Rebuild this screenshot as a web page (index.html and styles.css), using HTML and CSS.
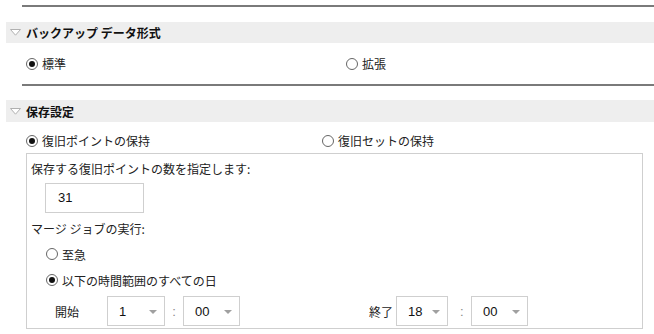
FILE: index.html
```html
<!DOCTYPE html>
<html lang="ja">
<head>
<meta charset="utf-8">
<link rel="stylesheet" href="styles.css">
</head>
<body>
<div class="page">
  <div class="rule"></div>
  <div class="sec-head">
    <svg class="tri" width="11" height="7" viewBox="0 0 11 7"><path d="M0.5 0.5 H10.5 L5.5 6.2 Z" fill="#fff" stroke="#b0b0b0" stroke-width="1"/></svg>
    <span>バックアップ データ形式</span>
  </div>
  <div class="opt-row row1">
    <label class="opt w320"><span class="radio on"></span>標準</label>
    <label class="opt"><span class="radio"></span>拡張</label>
  </div>
  <div class="rule"></div>
  <div class="sec-head sec2">
    <svg class="tri" width="11" height="7" viewBox="0 0 11 7"><path d="M0.5 0.5 H10.5 L5.5 6.2 Z" fill="#fff" stroke="#b0b0b0" stroke-width="1"/></svg>
    <span>保存設定</span>
  </div>
  <div class="opt-row row2">
    <label class="opt w296"><span class="radio on"></span>復旧ポイントの保持</label>
    <label class="opt"><span class="radio"></span>復旧セットの保持</label>
  </div>
  <div class="box">
    <div class="line">保存する復旧ポイントの数を指定します:</div>
    <div class="num">31</div>
    <div class="line l2">マージ ジョブの実行:</div>
    <div class="sub-opt first"><span class="radio"></span>至急</div>
    <div class="sub-opt"><span class="radio on"></span>以下の時間範囲のすべての日</div>
    <div class="time-row">
      <span class="tlabel start">開始</span>
      <div class="sel w58"><span>1</span><i class="arr"></i></div>
      <span class="colon c1">:</span>
      <div class="sel w57"><span>00</span><i class="arr"></i></div>
      <span class="tlabel end">終了</span>
      <div class="sel w52"><span>18</span><i class="arr"></i></div>
      <span class="colon c2">:</span>
      <div class="sel w57"><span>00</span><i class="arr"></i></div>
    </div>
  </div>
</div>
</body>
</html>
```

FILE: styles.css
```css
* { box-sizing: border-box; }
html, body { margin: 0; padding: 0; background: #fff; }
body {
  font-family: "Noto Sans CJK JP", "Liberation Sans", sans-serif;
  font-size: 12px;
  color: #222;
  width: 654px;
  height: 334px;
  overflow: hidden;
}
.page { padding: 5px 0 0 6px; }
.rule { margin-left: 16px; height: 2px; background: #7a7a7a; }
.sec-head {
  margin-top: 15px;
  height: 21px;
  background: #eeeeee;
  display: flex;
  align-items: center;
  padding-left: 4px;
  font-weight: bold;
  color: #111;
  font-size: 12px;
}
.sec-head.sec2 { margin-top: 14px; height: 22px; }
.tri { margin-right: 5px; }
.opt-row { display: flex; align-items: center; padding-left: 20px; }
.row1 { height: 41px; }
.row2 { height: 31px; padding-top: 6px; }
.opt { display: flex; align-items: center; line-height: 17px; }
.w320 { width: 320px; }
.w296 { width: 296px; }
.radio {
  width: 12px; height: 12px;
  border: 1px solid #666;
  border-radius: 50%;
  background: #fff;
  margin-right: 4px;
  display: inline-flex;
  align-items: center;
  justify-content: center;
  flex: none;
}
.radio.on::after {
  content: "";
  width: 6px; height: 6px;
  border-radius: 50%;
  background: #111;
}
.box {
  margin-left: 20px;
  width: 617px;
  border: 1px solid #cfcfcf;
  padding: 6px 0 2px 4px;
}
.line { line-height: 17px; }
.l2 { margin-top: 7px; }
.num {
  margin: 6px 0 0 14px;
  width: 99px; height: 30px;
  border: 1px solid #cfcfcf;
  font-family: "Liberation Sans", sans-serif;
  font-size: 13px;
  line-height: 28px;
  padding-left: 12px;
  color: #111;
}
.sub-opt {
  height: 26px;
  display: flex;
  align-items: center;
  padding-left: 15px;
  line-height: 17px;
}
.sub-opt.first { margin-top: 4px; }
.time-row { margin-top: 3px; display: flex; align-items: center; height: 30px; }
.tlabel { line-height: 17px; }
.start { margin-left: 24px; width: 52px; }
.end { margin-left: 129px; width: 27px; }
.sel {
  height: 30px;
  border: 1px solid #cfcfcf;
  position: relative;
  display: flex;
  align-items: center;
  padding-left: 11px;
  font-family: "Liberation Sans", sans-serif;
  font-size: 13px;
  color: #111;
}
.w58 { width: 58px; }
.w57 { width: 57px; }
.w52 { width: 52px; }
.arr {
  position: absolute;
  right: 7px;
  top: 13px;
  width: 0; height: 0;
  border-left: 4px solid transparent;
  border-right: 4px solid transparent;
  border-top: 4px solid #a0a0a0;
}
.colon { color: #888; text-align: center; font-family: "Liberation Sans", sans-serif; font-size: 13px; }
.c1 { width: 18px; }
.c2 { width: 23px; padding-left: 4px; text-align: left; margin-left: 8px; width: 15px; }
```
